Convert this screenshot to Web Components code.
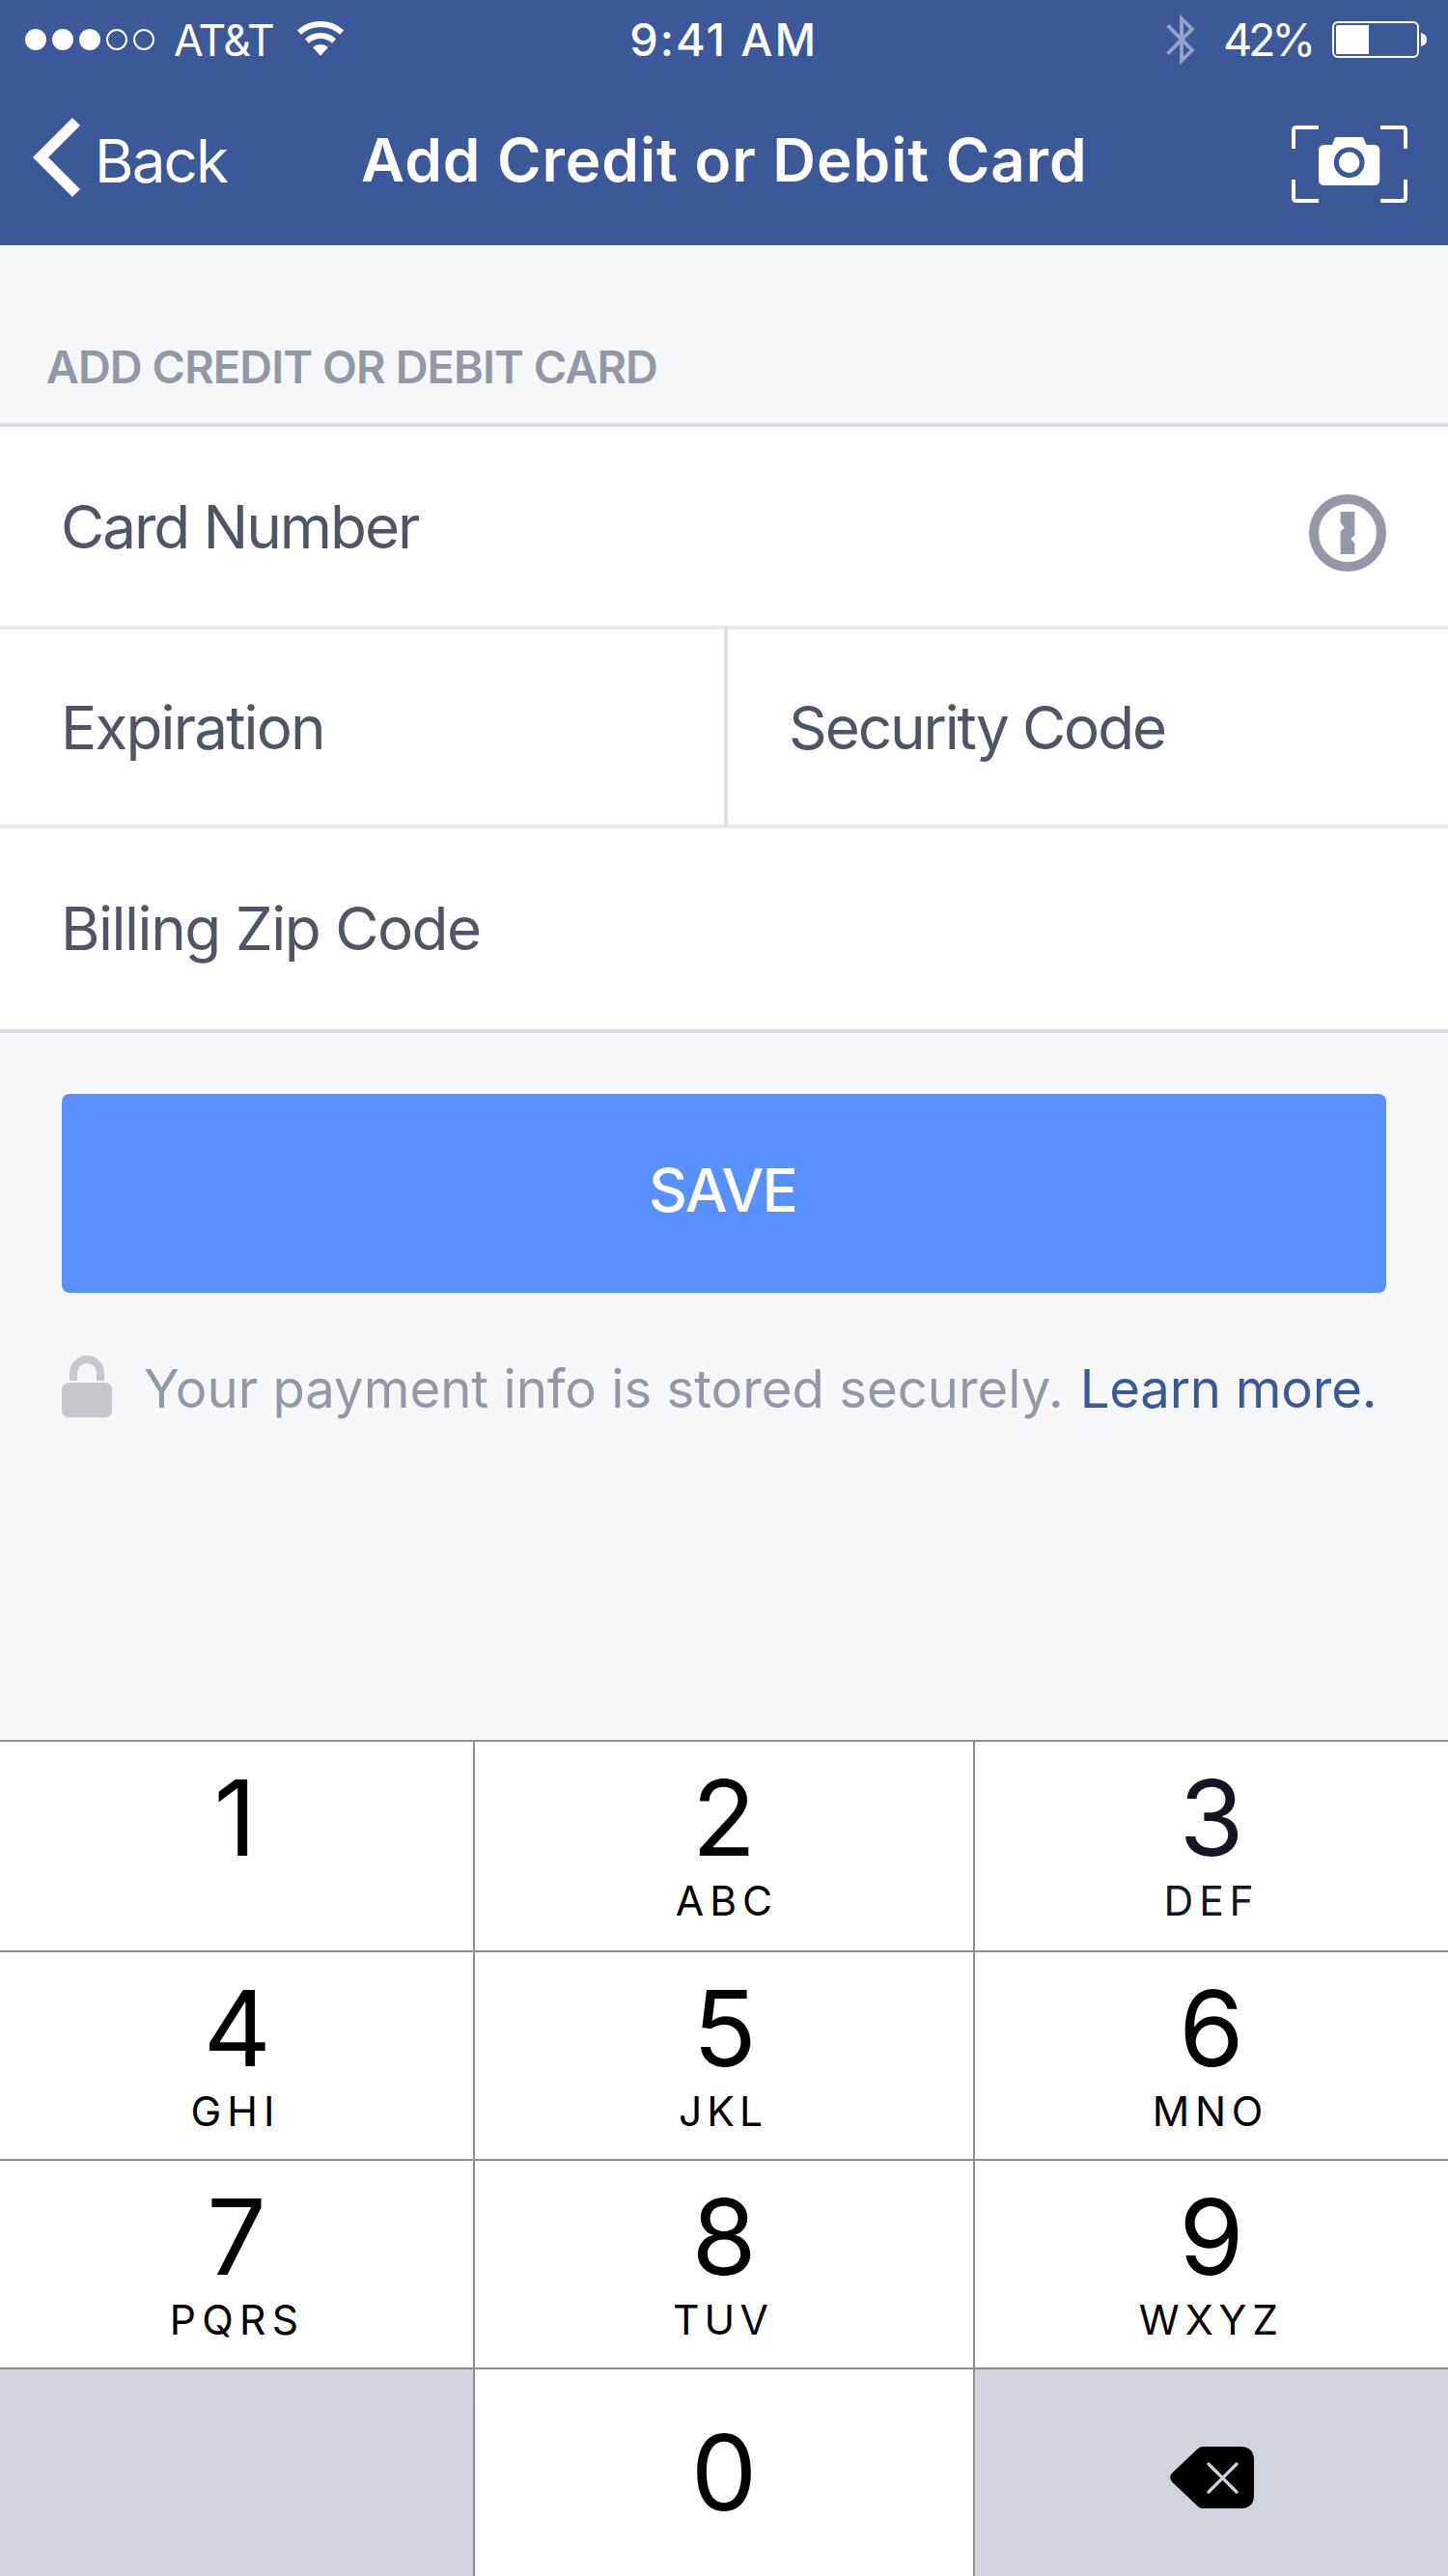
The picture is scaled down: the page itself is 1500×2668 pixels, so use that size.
<!DOCTYPE html>
<html lang="en">
<head>
<meta charset="utf-8">
<title>Add Credit or Debit Card</title>
<style>
  html, body { margin: 0; padding: 0; }
  body { width: 1500px; height: 2668px; background: #f6f7f9; overflow: hidden; font-family: Inter, "Liberation Sans", sans-serif; }
</style>
</head>
<body>
<payment-screen></payment-screen>

<script>
const define = (name, html) => {
  const template = document.createElement('template');
  template.innerHTML = html;
  customElements.define(name, class extends HTMLElement {
    constructor() {
      super();
      this.attachShadow({ mode: 'open' }).append(template.content.cloneNode(true));
    }
  });
};

/* Signal strength, carrier, clock and battery */
define('status-bar', `
<style>
  :host { display: grid; grid-template-columns: 652.3px auto 1fr; align-items: center; height: 82px; color: #fff; white-space: pre; }
  .group { display: flex; align-items: center; }
  .left { padding-left: 26px; }
  .dots { display: flex; gap: 6px; }
  i { box-sizing: border-box; width: 22px; height: 22px; border-radius: 50%; border: 2px solid #fff; }
  i.on { background: #fff; }
  .carrier { margin-left: 20px; font-size: 44.5px; letter-spacing: -1.43px; line-height: 50px; margin-top: 1px; }
  .wifi { margin-left: 24.7px; margin-top: -2px; }
  .time { font-size: 46.8px; font-weight: 500; letter-spacing: 2px; line-height: 50px; }
  .right { justify-content: flex-end; padding-right: 22px; }
  .pct { margin: 0 21px 0 29px; font-size: 46.8px; letter-spacing: -4.2px; line-height: 50px; }
  svg { display: block; flex: none; }
</style>
<div class="group left">
  <div class="dots"><i class="on"></i><i class="on"></i><i class="on"></i><i></i><i></i></div>
  <span class="carrier">AT&amp;T</span>
  <svg class="wifi" width="48" height="36" viewBox="0 0 48 36">
    <g fill="none" stroke="#fff" stroke-width="6"><path d="M1.9 11.5A33 33 0 0 1 46.1 11.5"/><path d="M9.95 20.4A21 21 0 0 1 38.05 20.4"/></g>
    <path fill="#fff" d="M24 35.7L16 27.1A12 12 0 0 1 32 27.1Z"/>
  </svg>
</div>
<span class="time">9:41 AM</span>
<div class="group right">
  <svg width="30" height="52" viewBox="0 0 30 52"><path fill="none" stroke="#93a3c9" stroke-width="3.8" d="M1.6 11.4L27 37L16 47.8V4.2L27 15.2L1.6 40.6"/></svg>
  <span class="pct">42%</span>
  <svg width="98" height="38" viewBox="0 0 98 38">
    <rect x="1" y="1" width="88" height="36" rx="5" fill="none" stroke="#fff" stroke-width="2"/>
    <path fill="#fff" d="M5.5 4H38V34H5.5Q4 34 4 32.5V5.5Q4 4 5.5 4ZM92 12Q98 13.5 98 19T92 26Z"/>
  </svg>
</div>`);

/* Blue navigation bar with back button, title and card scanner */
define('nav-bar', `
<style>
  :host { display: flex; align-items: center; height: 172px; padding: 0 42px 0 34px; color: #fff; white-space: pre; }
  .back { display: flex; align-items: center; gap: 15px; font-size: 62px; line-height: 70px; letter-spacing: -1.9px; }
  .back svg { margin-top: -10px; }
  .back span { margin-top: -3px; }
  h1 { margin: -5px 0 0 138.8px; font-size: 62px; line-height: 70px; font-weight: 600; letter-spacing: .932px; }
  .scan { margin: 4px 0 0 auto; }
  svg { display: block; flex: none; }
</style>
<div class="back">
  <svg width="49" height="82" viewBox="0 0 49 82"><path fill="#fff" d="M41 0L49 8L16 41L49 74L41 82L0 41Z"/></svg>
  <span>Back</span>
</div>
<h1>Add Credit or Debit Card</h1>
<svg class="scan" width="120" height="80" viewBox="0 0 120 80">
  <g fill="none" stroke="#fff" stroke-width="4"><path d="M2 24V5Q2 2 5 2H28M92 2H115Q118 2 118 5V24M118 56V75Q118 78 115 78H92M28 78H5Q2 78 2 75V56"/></g>
  <path fill="#fff" d="M34 20H42L45 13Q45.5 12 46.5 12H73Q74 12 74.5 13L77.5 20H85.3Q91.3 20 91.3 26V56Q91.3 62 85.3 62H34Q28 62 28 56V26Q28 20 34 20Z"/>
  <circle cx="59.7" cy="38.3" r="13.3" fill="#fff" stroke="#3b5998" stroke-width="5.2"/>
</svg>`);

/* One input cell; its label is slotted, with an optional trailing icon */
define('form-field', `
<style>
  :host { display: flex; flex: 1; align-items: center; justify-content: space-between; background: #fff; padding: 0 64px 0 63px; color: #4e5665; font-size: 62px; line-height: 76px; white-space: pre; }
  ::slotted(svg) { display: block; }
</style>
<slot></slot><slot name="icon"></slot>`);

define('card-form', `
<style>
  :host { display: block; }
  h2 { margin: 0; height: 184px; box-sizing: border-box; padding: 96px 0 0 47.8px; font-size: 46.8px; line-height: 60px; font-weight: 600; letter-spacing: -.904px; color: #9298a5; white-space: pre; }
  .fields { border: solid #dcdde3; border-width: 4px 0; background: #e8e9ed; display: flex; flex-direction: column; gap: 4px; }
  .row { display: flex; }
  .one { height: 206px; } .two { height: 202px; } .three { height: 208px; }
  .one form-field, .two form-field { padding-top: 2px; }
  .one svg { margin-top: 12px; }
  .rule { width: 4px; background: #dddde4; margin-top: -4px; margin-bottom: -2px; z-index: 1; }
  .exp { flex: 0 0 750px; box-sizing: border-box; }
</style>
<h2>ADD CREDIT OR DEBIT CARD</h2>
<div class="fields">
  <div class="row one">
    <form-field style="letter-spacing:-2.06px">Card Number<svg slot="icon" width="80" height="80" viewBox="0 0 80 80">
      <circle cx="40" cy="40" r="35" fill="none" stroke="#9298a5" stroke-width="10"/>
      <path fill="#9298a5" d="M32.6 18H47.4V42L43.3 46.2L47.4 50.8V62H32.6V38.5L36.8 34.2L32.6 29.6Z"/></svg></form-field>
  </div>
  <div class="row two">
    <form-field class="exp" style="letter-spacing:-1.85px">Expiration</form-field>
    <div class="rule"></div>
    <form-field style="letter-spacing:-2.13px">Security Code</form-field>
  </div>
  <div class="row three"><form-field style="letter-spacing:-1.5px">Billing Zip Code</form-field></div>
</div>`);

define('save-button', `
<style>
  :host { display: flex; align-items: center; justify-content: center; box-sizing: border-box; margin: 62.7px 64px 0; height: 206px; padding: 0 3px 6px 0; border-radius: 8px; background: #5890ff; color: #fff; font-size: 62px; line-height: 76px; font-weight: 500; letter-spacing: -1.9px; }
</style>
<slot></slot>`);

define('secure-note', `
<style>
  :host { display: flex; align-items: center; height: 64px; margin: 65.3px 0 0 64px; font-size: 54.5px; line-height: 60px; color: #9299a6; white-space: pre; }
  svg { display: block; flex: none; margin-right: 33px; }
  span { letter-spacing: -.024px; margin-top: 4px; }
  a { margin: 4px 0 0 17px; color: #3b5998; letter-spacing: -.243px; }
</style>
<svg width="52" height="64" viewBox="0 0 52 64"><path fill="#c8c7cd" d="M8 26V18A18 18 0 0 1 44 18V26H36V18A10 10 0 0 0 16 18V26ZM8 28H44Q52 28 52 36V56Q52 64 44 64H8Q0 64 0 56V36Q0 28 8 28Z"/></svg>
<span>Your payment info is stored securely.</span><a>Learn more.</a>`);

/* Keypad key: slotted digit, optional letters with their own tracking */
define('pad-key', `
<style>
  :host { display: flex; flex-direction: column; align-items: center; box-sizing: border-box; padding-top: 13.5px; background: #fff; color: #000; font-size: 108.7px; line-height: 130px; }
  :host(.zero) { padding-top: 41.5px; }
  :host(.gray) { background: #d1d4dc; }
  :host(.mark) { color: #141722; }
  ::slotted([slot=letters]) { font-size: 42.6px; line-height: 42px; letter-spacing: var(--ls); margin-right: calc(2 * var(--pull) - var(--ls)); }
  ::slotted(svg) { display: block; margin: 66.5px 0 0 1px; }
</style>
<div><slot></slot></div><slot name="letters"></slot>`);

define('number-pad', `
<style>
  :host { display: grid; grid-template-columns: 490px 516px 490px; grid-template-rows: 216px 214px 214px 214px; gap: 2px; border-top: 2px solid #8e8e8e; background: #8e8e8e; }
</style>
<pad-key><span style="margin-right:3px">1</span></pad-key>
<pad-key>2<span slot="letters" style="--ls:6.02px;--pull:0px">ABC</span></pad-key>
<pad-key class="mark">3<span slot="letters" style="--ls:5.83px;--pull:2.8px">DEF</span></pad-key>
<pad-key><span style="margin-left:1.5px">4</span><span slot="letters" style="--ls:6.03px;--pull:4px">GHI</span></pad-key>
<pad-key><span style="margin-left:1.5px">5</span><span slot="letters" style="--ls:5.04px;--pull:3.5px">JKL</span></pad-key>
<pad-key>6<span slot="letters" style="--ls:5.72px;--pull:4px">MNO</span></pad-key>
<pad-key>7<span slot="letters" style="--ls:6.3px;--pull:2.6px">PQRS</span></pad-key>
<pad-key>8<span slot="letters" style="--ls:5.1px;--pull:3.6px">TUV</span></pad-key>
<pad-key>9<span slot="letters" style="--ls:5.86px;--pull:3px">WXYZ</span></pad-key>
<pad-key class="gray"></pad-key>
<pad-key class="zero">0</pad-key>
<pad-key class="gray"><svg width="87" height="64" viewBox="0 0 87 64">
  <path d="M34 0H73Q87 0 87 14V50Q87 64 73 64H34Q31 64 29 62L2 36.5Q-1.5 32 2 27.5L29 2Q31 0 34 0Z"/>
  <path fill="none" stroke="#d1d4dc" stroke-width="3.2" stroke-linecap="round" d="M40 18L69 47M69 18L40 47"/></svg></pad-key>`);

define('payment-screen', `
<style>
  :host { display: flex; flex-direction: column; width: 1500px; height: 2668px; background: #f6f7f9; }
  header { background: #3b5998; height: 254px; flex: none; }
  number-pad { margin-top: auto; flex: none; }
</style>
<header><status-bar></status-bar><nav-bar></nav-bar></header>
<card-form></card-form>
<save-button>SAVE</save-button>
<secure-note></secure-note>
<number-pad></number-pad>`);
</script>
</body>
</html>
